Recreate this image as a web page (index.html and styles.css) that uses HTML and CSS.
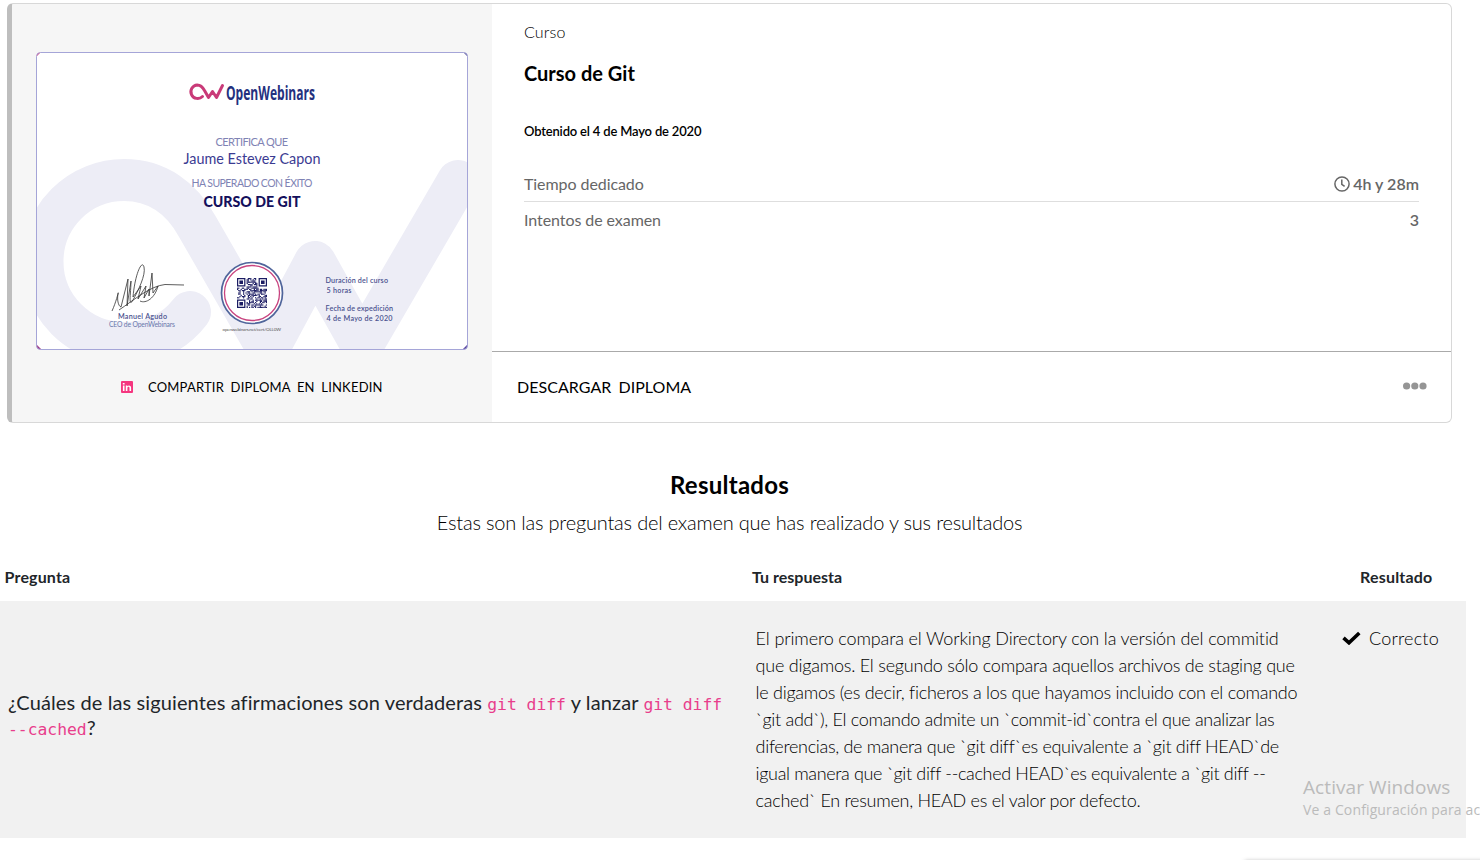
FILE: index.html
```html
<!DOCTYPE html>
<html lang="es">
<head>
<meta charset="utf-8">
<title>Curso de Git</title>
<link rel="stylesheet" href="styles.css">
</head>
<body>
<article class="card">
  <aside class="side">
    <svg class="diploma" viewBox="36 52 432 298" width="432" height="298">
      <defs><clipPath id="frame"><rect x="36.5" y="52.5" width="431" height="297" rx="4"/></clipPath></defs>
      <rect x="36.5" y="52.5" width="431" height="297" rx="4" fill="#fff"/>
      <g clip-path="url(#frame)">
        <path class="mark" d="M190 312C173 334 150 343 124 343A81.500 81.500 0 0 1 124 180C158 180 182 199 197 226L266 346H270L315 262L362 346L458 181"/>
        <path d="M36 52h5l-5 5z" fill="#e0457f"/><path d="M463 52h5v5z" fill="#555091"/>
        <path d="M36 344l6 6h-6z" fill="#9b3586"/><path d="M468 344l-6 6h6z" fill="#55409b"/>
      </g>
      <rect x="36.5" y="52.5" width="431" height="297" rx="4" fill="none" stroke="#a5a5d8"/>
      <path class="logo" d="M202.500 96.500A6.800 6.800 0 1 1 197.200 84.900C201.500 84.900 203.200 88 204.500 90.500L208.500 97.500L212.500 91.500L216.500 97.500L222.500 85.500"/>
      <text class="brand" x="226" y="99.500" textLength="89" lengthAdjust="spacingAndGlyphs">OpenWebinars</text>
      <g class="cert">
        <text class="soft" x="215.500" y="146.300" font-size="11" textLength="72.500">CERTIFICA QUE</text>
        <text x="183.500" y="164" font-size="14.500" textLength="137" lengthAdjust="spacingAndGlyphs">Jaume Estevez Capon</text>
        <text class="soft" x="191.500" y="187.300" font-size="10.500" textLength="121">HA SUPERADO CON ÉXITO</text>
        <text class="strong" x="203.500" y="207.300" font-size="14.500" textLength="97" lengthAdjust="spacingAndGlyphs">CURSO DE GIT</text>
        <text class="small" x="118" y="318.500" textLength="49">Manuel Agudo</text>
        <text class="soft2" x="109" y="326.500" font-size="6.800" textLength="66">CEO de OpenWebinars</text>
        <text class="small" x="325.500" y="283" textLength="62.500">Duración del curso</text>
        <text class="small" x="326.500" y="293" textLength="25">5 horas</text>
        <text class="small" x="325.500" y="310.500" textLength="67.500">Fecha de expedición</text>
        <text class="small" x="326.500" y="321" textLength="66">4 de Mayo de 2020</text>
        <text class="tiny" x="222.500" y="331" textLength="58.500">openwebinars.net/cert/OLL0W</text>
      </g>
      <path class="sign" d="M112 311C117 300 119 289 118 294S118 306 121 307L128 279L127 306L131 281C131 292 128 309 133 300S146 275 144 267S135 274 133 297L141 286L138 299L146 286L144 298L149 289V296L152 273L153 293L158 286C155 298 146 304 140 301M119 310C134 300 150 286 165 284.500L184 285"/>
      <circle cx="252" cy="293" r="30.500" fill="#fff" stroke="#50659b" stroke-width="1.700"/>
      <circle cx="252" cy="293" r="27.500" fill="none" stroke="#c8437f" stroke-width="1.300"/>
      <g class="qr" transform="translate(237 278)">
        <path d="M.6.6h7.200v7.200H.6zM22.200.6h7.200v7.200h-7.200zM.6 22.200h7.200v7.200H.6z" fill="none" stroke="#1b1c63" stroke-width="1.200"/>
        <path d="M2.400 2.400H6V6H2.400zM24 2.400h3.600V6H24zM2.400 24H6v3.600H2.400z" fill="#1b1c63"/>
        <g id="modules" fill="#1b1c63"></g>
      </g>
    </svg>
    <a class="share">
      <svg width="12" height="12" viewBox="0 0 12 12"><rect width="12" height="12" rx="1" fill="#f5367f"/><path d="M1.900 4.500h1.600V10H1.900zM1.800 2h1.800v1.600H1.800zM4.800 4.500h1.500v.8c.8-1.400 3.800-1.300 3.800 1.400V10H8.500V7c0-1.600-2.100-1.500-2.100 0v3H4.800z" fill="#fff"/></svg>
      <span>COMPARTIR DIPLOMA EN LINKEDIN</span>
    </a>
  </aside>
  <section class="main">
    <div class="info">
      <div class="kind">Curso</div>
      <h1 class="title">Curso de Git</h1>
      <div class="date">Obtenido el 4 de Mayo de 2020</div>
      <div class="stat stat-line"><span>Tiempo dedicado</span><b class="value"><svg width="16" height="16" viewBox="0 0 16 16" fill="none" stroke="#666" stroke-width="1.500"><circle cx="8" cy="8" r="7.100"/><path d="M7.800 3.500V8.300L10.600 10.400"/></svg><span>4h y 28m</span></b></div>
      <div class="stat stat-last"><span>Intentos de examen</span><b class="value">3</b></div>
    </div>
    <div class="actions">
      <a class="download">DESCARGAR DIPLOMA</a>
      <svg width="24" height="8" viewBox="0 0 24 8" fill="#959595"><circle cx="3.600" cy="4" r="3.600"/><circle cx="11.800" cy="4" r="3.600"/><circle cx="20" cy="4" r="3.600"/></svg>
    </div>
  </section>
</article>
<h2 class="heading">Resultados</h2>
<p class="lead">Estas son las preguntas del examen que has realizado y sus resultados</p>
<div class="row head"><div>Pregunta</div><div>Tu respuesta</div><div class="head-result">Resultado</div></div>
<div class="row body">
  <div class="question">¿Cuáles de las siguientes afirmaciones son verdaderas <code>git diff</code> y lanzar <code>git diff<br>--cached</code>?</div>
  <div class="answer">
    <div class="line loose">El primero compara el Working Directory con la versión del commitid</div>
    <div class="line">que digamos. El segundo sólo compara aquellos archivos de staging que</div>
    <div class="line snug">le digamos (es decir, ficheros a los que hayamos incluido con el comando</div>
    <div class="line tight">`git add`), El comando admite un `commit-id`contra el que analizar las</div>
    <div class="line tight">diferencias, de manera que `git diff`es equivalente a `git diff HEAD`de</div>
    <div class="line tighter">igual manera que `git diff --cached HEAD`es equivalente a `git diff --</div>
    <div class="line snug">cached` En resumen, HEAD es el valor por defecto.</div>
  </div>
  <div class="result"><svg width="19" height="14" viewBox="0 0 19 14"><path d="M1.500 6.800L7 11.800L17.300 2" fill="none" stroke="#000" stroke-width="3.600"/></svg><span>Correcto</span></div>
</div>
<div class="watermark"><div class="wm-title">Activar Windows</div><div class="wm-text">Ve a Configuración para ac</div></div>
<div class="corner"></div>
<script src="qr.js"></script>
</body>
</html>
```
FILE: styles.css
```css
* { box-sizing: border-box; }
html { overflow: hidden; }
body { margin: 0; height: 860px; overflow: hidden; position: relative; background: #fff; color: #000; font-family: Lato, sans-serif; }
.card { display: flex; width: 1445px; height: 420px; margin: 3px 0 0 7px; border: 1px solid #d8d8d8; border-left: 5px solid #bebebe; border-radius: 6px; overflow: hidden; }
.side { width: 480px; flex: none; background: #f6f6f6; padding: 48px 24px 0; }
.diploma { display: block; }
.mark { fill: none; stroke: #ededf6; stroke-width: 42; stroke-linecap: round; stroke-linejoin: round; }
.logo { fill: none; stroke: #c93a78; stroke-width: 3; stroke-linecap: round; stroke-linejoin: round; }
.brand { font: 700 19px "Open Sans", sans-serif; fill: #24307e; }
.cert { fill: #3b3b92; }
.soft { fill: #7f83b4; }
.soft2 { fill: #6a78ac; }
.strong { font-weight: 900; fill: #14105c; }
.small { font-size: 7.2px; font-weight: 600; fill: #4b528f; }
.tiny { font-size: 4.6px; fill: #555; }
.sign { fill: none; stroke: #333; stroke-width: .8; }
.share { display: flex; align-items: center; height: 20px; margin-top: 27px; padding-left: 85px; gap: 15px; font-size: 13px; letter-spacing: .2px; word-spacing: 3px; white-space: nowrap; }
.main { flex: 1; display: flex; flex-direction: column; }
.info { height: 347px; padding: 17px 32px 0; }
.kind { font-size: 16px; line-height: 22px; font-weight: 300; letter-spacing: .15px; }
.title { margin: 15px 0 0; font-size: 20px; line-height: 30px; font-weight: 700; }
.date { margin-top: 33px; font-size: 13px; line-height: 20px; font-weight: 600; letter-spacing: -.18px; }
.stat { display: flex; justify-content: space-between; align-items: center; height: 36px; font-size: 16px; letter-spacing: -.07px; color: #666; }
.stat-line { margin-top: 25px; border-bottom: 1px solid #dedede; }
.stat-last { height: 35px; }
.value { display: flex; align-items: center; gap: 3px; font-weight: 600; letter-spacing: .02px; }
.actions { flex: 1; display: flex; align-items: center; justify-content: space-between; padding: 0 24px 2px 25px; border-top: 1px solid #aaa; }
.download { font-size: 16px; word-spacing: 3px; letter-spacing: .04px; }
.heading { width: 1459px; margin: 47px 0 0; text-align: center; font-size: 24px; line-height: 30px; font-weight: 700; letter-spacing: .25px; }
.lead { width: 1459px; margin: 7px 0 1px; text-align: center; font-size: 20px; line-height: 30px; font-weight: 300; letter-spacing: -.19px; }
.row { display: grid; grid-template-columns: 752px 575px 139px; width: 1466px; }
.head { height: 63px; padding-top: 29px; font-size: 16px; line-height: 20px; font-weight: 700; color: #212529; }
.head > div:first-child { padding-left: 4.6px; letter-spacing: .15px; }
.head-result { padding-left: 33px; letter-spacing: .2px; }
.body { height: 237px; background: #f1f1f1; }
.question { padding: 89px 0 0 8px; font-size: 20px; line-height: 25px; letter-spacing: .11px; color: #212529; white-space: nowrap; }
.question code { font: 16.4px/16px "DejaVu Sans Mono", monospace; letter-spacing: -.03px; color: #e83e8c; }
.answer { padding: 24px 0 0 3.6px; font-size: 18px; line-height: 27px; font-weight: 300; white-space: nowrap; }
.line { letter-spacing: -.23px; }
.loose { letter-spacing: -.13px; }
.snug { letter-spacing: -.27px; }
.tight { letter-spacing: -.31px; }
.tighter { letter-spacing: -.35px; }
.result { display: flex; align-items: center; gap: 8px; height: 27px; margin: 23px 0 0 15px; font-size: 18px; font-weight: 300; letter-spacing: .2px; }
.watermark { position: absolute; left: 1303px; top: 775px; color: #bbb; font-family: "Open Sans", sans-serif; white-space: nowrap; }
.wm-title { font-size: 19px; line-height: 24px; letter-spacing: .08px; }
.wm-text { font-size: 14px; line-height: 22px; letter-spacing: .13px; }
.corner { position: absolute; left: 1245px; top: 861px; width: 240px; height: 10px; box-shadow: 0 0 4px #aaa; }
```
FILE: qr.js
```js
// Fills the data area of the code, leaving the three finder squares clear.
const group = document.getElementById("modules");
let seed = 41;
for (let y = 0; y < 25; y++) {
  for (let x = 0; x < 25; x++) {
    seed = (seed * 1103515245 + 12345) % 2147483648;
    const finder = (x < 8 && y < 8) || (x > 16 && y < 8) || (x < 8 && y > 16);
    if (finder || seed / 2147483648 < 0.45) continue;
    const cell = document.createElementNS("http://www.w3.org/2000/svg", "rect");
    cell.setAttribute("x", x * 1.2);
    cell.setAttribute("y", y * 1.2);
    cell.setAttribute("width", 1.2);
    cell.setAttribute("height", 1.2);
    group.appendChild(cell);
  }
}
```
